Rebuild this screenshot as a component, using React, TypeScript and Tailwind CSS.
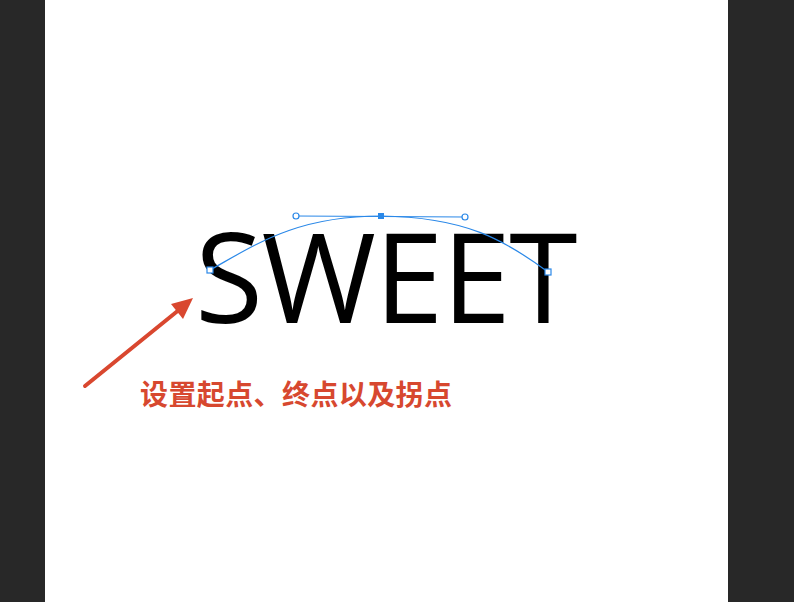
export default function App() {
  return (
    <div className="flex h-[602px] w-[794px] bg-[#282828]">
      <div className="w-[45px] shrink-0" />
      <div className="relative flex w-[683px] shrink-0 flex-col bg-white">
        <div
          className="mt-[200px] ml-[150px] text-[124px] font-medium leading-[150px] text-black tracking-[-1.5px]"
          style={{ fontFamily: '"Open Sans", sans-serif' }}
        >
          SWEET
        </div>
        <div
          className="mt-[25px] ml-[95px] text-[28px] font-bold leading-[36px] text-[#d7482f] tracking-[0.4px]"
          style={{ fontFamily: '"Noto Sans CJK SC", sans-serif' }}
        >
          设置起点、终点以及拐点
        </div>

        {/* path overlay, coordinates relative to canvas */}
        <svg className="pointer-events-none absolute inset-0" width="683" height="602">
          <path
            d="M165 270 C 210 245 251 216 336 216 C 420 217 460 240 503 272"
            fill="none"
            stroke="#2a88e8"
            strokeWidth="1.2"
          />
          <line x1="251" y1="216" x2="420" y2="217" stroke="#2a88e8" strokeWidth="1.2" />
          <circle cx="251" cy="216" r="3" fill="white" stroke="#2a88e8" strokeWidth="1.2" />
          <circle cx="420" cy="217" r="3" fill="white" stroke="#2a88e8" strokeWidth="1.2" />
          <rect x="333" y="213" width="6" height="6" fill="#2a88e8" />
          <rect x="162" y="267" width="6" height="6" fill="white" stroke="#2a88e8" strokeWidth="1.2" />
          <rect x="500" y="269" width="6" height="6" fill="white" stroke="#2a88e8" strokeWidth="1.2" />

          {/* arrow */}
          <line x1="40" y1="386" x2="140" y2="305" stroke="#d9472f" strokeWidth="4" strokeLinecap="round" />
          <path d="M148 298 L126 304 L138 319 Z" fill="#d9472f" />
        </svg>
      </div>
      <div className="flex-1" />
    </div>
  );
}
